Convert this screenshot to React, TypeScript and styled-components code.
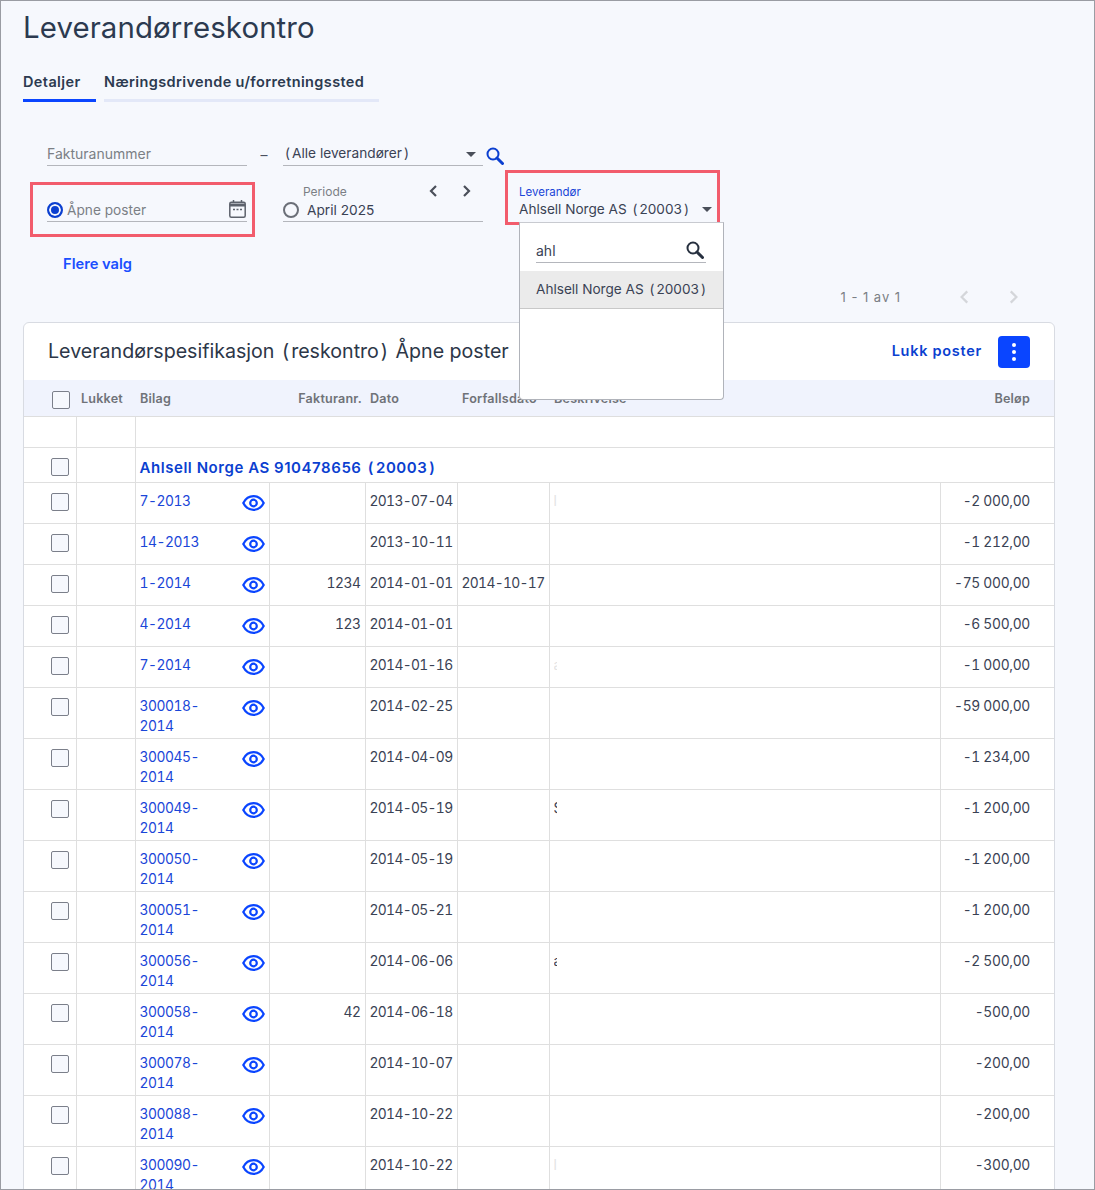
import React from "react";
import styled, { createGlobalStyle } from "styled-components";

const Global = createGlobalStyle`
  html, body { margin: 0; padding: 0; background: #f6f8fd; }
  * { box-sizing: border-box; }
  body { font-family: Inter, "Liberation Sans", sans-serif; color: #3a4254; }
`;

const Frame = styled.div`
  width: 1095px; height: 1190px; overflow: hidden;
  border: 1px solid #9a9ca3; background: #f6f8fd;
  padding: 9px 39px 0 22px;
`;
const Title = styled.h1`
  margin: 0; height: 36px; font-size: 29.4px; line-height: 36px; font-weight: 400; color: #2c3a50; letter-spacing: .1px;
`;
const Tabs = styled.nav`display: flex; gap: 8px; margin-top: 24px;`;
const Tab = styled.div<{ $active?: boolean }>`
  height: 32px; padding: 3px 0 0; font-size: 14.5px; line-height: 18px; font-weight: 600; color: #2c3a50; white-space: nowrap;
  border-bottom: 3px solid ${p => (p.$active ? "#0a45ff" : "#e3e8f8")};
  width: ${p => (p.$active ? "73px" : "275px")};
  letter-spacing: .38px;
`;
const FilterRow = styled.div`display: flex; padding-left: 24px; margin-top: 41px; align-items: flex-end;`;
const FilterRow2 = styled(FilterRow)`margin-top: 16px;`;
const Underlined = styled.div`
  position: relative; width: 200px; height: 23px; border-bottom: 1px solid #b4b6bc;
  font-size: 14px; line-height: 20px; color: #7b7f85; display: flex; align-items: center;
`;
const Tall = styled(Underlined)`height: 40px; align-items: flex-end; padding-bottom: 1px;`;
const Dash = styled.div`width: 36px; padding-right: 2px; text-align: center; font-size: 14px; line-height: 23px; color: #4a5060;`;
const Grow = styled.span`flex: 1;`;
const Caret = styled.span`
  width: 0; height: 0; border-left: 5px solid transparent; border-right: 5px solid transparent;
  border-top: 5px solid #4a4f5a; margin-right: 7px; flex: none;
`;
const SearchBtn = styled.span`display: flex; margin: 0 0 1px 3px;`;
const Radio = styled.span<{ $on?: boolean }>`
  width: 16px; height: 16px; border-radius: 50%; flex: none; margin: 0 ${p => (p.$on ? "4px" : "8px")} 2px 0;
  border: 2px solid ${p => (p.$on ? "#0b3fd0" : "#6b6f78")}; background: ${p => (p.$on ? "#0b3fd0" : "transparent")};
  box-shadow: ${p => (p.$on ? "inset 0 0 0 2px #f6f8fd" : "none")};
`;
const Value = styled.span<{ $dark?: boolean; $up?: boolean }>`
  color: ${p => (p.$dark ? "#3a4254" : "#7b7f85")}; font-size: 13.7px; padding-left: ${p => (p.$up ? "2px" : "0")};
  margin-top: ${p => (p.$up ? "-2px" : "0")};
`;
const FloatLabel = styled.span`
  position: absolute; left: 20px; top: 2px; font-size: 12px; line-height: 16px; color: #7b7f85;
`;
const Arrows = styled.span`
  position: absolute; left: 143px; top: 1px; width: 48px; display: flex; justify-content: space-between; color: #4a4f5a;
`;
const Highlight = styled.div<{ $l: number; $t: number; $w: number; $h: number }>`
  position: absolute; left: ${p => p.$l}px; top: ${p => p.$t}px; width: ${p => p.$w}px; height: ${p => p.$h}px;
  border: 3px solid #f25c6c; pointer-events: none;
`;
const SupplierField = styled.div`
  position: relative; margin-left: 36px; width: 200px; height: 40px; font-size: 13.6px; color: #3a4254;
`;
const SupplierLabel = styled.div`font-size: 11.5px; line-height: 16px; color: #1a46d8; padding-top: 2px;`;
const SupplierValue = styled.div`display: flex; align-items: center; line-height: 18px; white-space: pre;`;
const Paren = styled.span`margin: 0 2px;`;
const Gap = styled.span`margin: 0 1px;`;
const Menu = styled.div`
  position: absolute; left: 0; top: 40px; width: 205px; height: 178px; z-index: 5; background: #fff;
  border: 1px solid #b0b3ba; border-top-color: #c8cad0; border-radius: 0 0 4px 4px; padding-top: 17px;
`;
const MenuSearch = styled.div`
  margin: 0 17px 0 16px; height: 23px; border-bottom: 1px solid #b4b6bc; display: flex; align-items: center;
  justify-content: space-between; font-size: 14px; color: #3a4254; padding: 0 2px 2px 0;
`;
const MenuItem = styled.div`
  margin-top: 8px; height: 38px; background: #ebebeb; border-bottom: 1px solid #c8c8c8; padding-left: 16px;
  font-size: 13.6px; line-height: 36px; color: #3a4254; white-space: pre;
`;
const More = styled.a`
  display: block; margin: 32px 0 0 40px; height: 20px; font-size: 14.7px; line-height: 20px; font-weight: 600; color: #1a4fff;
`;
const Pager = styled.div`
  display: flex; align-items: center; justify-content: flex-end; padding-right: 33px; margin-top: 14px; height: 18px;
  font-size: 13px; color: #7b7f85; letter-spacing: .95px;
`;
const PagerText = styled.span`margin-right: 55px;`;
const PagerArrows = styled.span`display: flex; gap: 30px; color: #d4d6da;`;
const Card = styled.section`
  margin-top: 16px; width: 1032px; border: 1px solid #d8dbe2; border-radius: 6px 6px 0 0; background: #fff;
`;
const CardHead = styled.header`
  display: flex; align-items: center; height: 57px; padding: 0 24px;
`;
const CardTitle = styled.h2`margin: -2px 0 0; flex: 1; font-size: 19.62px; font-weight: 400; color: #2d3748; white-space: pre;`;
const Lukk = styled.a`font-size: 14.5px; font-weight: 600; color: #0b3fd0; letter-spacing: .72px; margin: -2px 16px 0 0;`;
const DotsBtn = styled.button`
  width: 32px; height: 32px; border: 0; border-radius: 4px; background: #0a45ff; display: flex; flex-direction: column;
  align-items: center; justify-content: center; gap: 3px; padding: 0;
`;
const Dot = styled.i`width: 4px; height: 4px; border-radius: 50%; background: #fff;`;
const Table = styled.table`width: 1030px; table-layout: fixed; border-collapse: collapse; font-size: 14px;`;
const Th = styled.th<{ $right?: boolean }>`
  height: 36px; padding: 1px 3px 0 5px; background: #f0f3fd; border-bottom: 1px solid #dedede; font-size: 12.6px; font-weight: 600;
  color: #6f7278; white-space: nowrap; text-align: ${p => (p.$right ? "right" : "left")}; vertical-align: middle; letter-spacing: .2px;
`;
const HeadCheckTh = styled(Th)`padding-left: 27px;`;
const AmountTh = styled(Th)`padding-right: 24px;`;
const Td = styled.td`
  height: 41px; padding: 8px 4px 2px 4px; border: 1px solid #dfdfdf; vertical-align: top; line-height: 20px; color: #3a4254;
  font-size: 13.8px; font-variant-numeric: tabular-nums; letter-spacing: -.45px;
  &:first-child { border-left: 0; }
  &:last-child { border-right: 0; }
`;
const NumTd = styled(Td)`text-align: right; padding-right: 4px;`;
const DateTd = styled(Td)`white-space: nowrap; padding-right: 0; letter-spacing: -.65px;`;
const AmountTd = styled(Td)`text-align: right; padding-right: 24px; letter-spacing: -.3px;`;
const FilterTd = styled(Td)`height: 31px;`;
const GroupTd = styled(Td)`height: 35px; padding: 10px 4px 0; font-size: 15px; font-weight: 600; color: #0b3fd0; letter-spacing: .55px; white-space: pre; font-variant-numeric: normal;`;
const CheckCell = styled(Td)`padding: 10px 0 0 27px;`;
const GroupCheckCell = styled(CheckCell)`height: 35px;`;
const Check = styled.span<{ $head?: boolean }>`
  display: block; width: 18px; height: 18px; border: 1px solid #7b7f8a; border-radius: 2px; background: #f6f8fd;
  margin: ${p => (p.$head ? "4px 0 0 1px" : "0")};
`;
const BilagWrap = styled.div`display: flex; justify-content: space-between; align-items: flex-start;`;
const Link = styled.a`width: 72px; color: #1a46d8;`;
const EyeBox = styled.span`display: flex; margin: 4px 0 0 0;`;
const Clip = styled.span<{ $faint?: boolean }>`
  display: block; width: 3px; overflow: hidden; color: ${p => (p.$faint ? "#e4e4e4" : "#3a4254")}; letter-spacing: 0;
`;

const SearchIcon = ({ color }: { color: string }) => (
  <svg width="18" height="18" viewBox="0 0 18 18" fill="none" aria-hidden>
    <circle cx="7" cy="7" r="5.5" stroke={color} strokeWidth="2" />
    <path d="M11 11 16.500 16.500" stroke={color} strokeWidth="3" strokeLinecap="round" />
  </svg>
);
const Chev = ({ dir, sw = 2.2, size = 16 }: { dir: "l" | "r"; sw?: number; size?: number }) => (
  <svg width={size} height={size} viewBox="0 0 16 16" fill="none" aria-hidden>
    <path d={dir === "l" ? "M10 3 5 8l5 5" : "M6 3l5 5-5 5"} stroke="currentColor" strokeWidth={sw} />
  </svg>
);
const CalendarWrap = styled.span`display: flex; margin: 0 1px 2px 0;`;
const Calendar = () => (
  <CalendarWrap>
    <svg width="17" height="18" viewBox="0 0 17 18" fill="none" aria-hidden>
      <path d="M4.500 0v3M12.500 0v3" stroke="#5d626c" strokeWidth="1.500" />
      <rect x=".8" y="2.200" width="15.400" height="15" rx="1.500" stroke="#5d626c" strokeWidth="1.500" />
      <path d="M1 5h15" stroke="#5d626c" strokeWidth="3" />
      <path d="M4 9.500h2M7.500 9.500h2M11 9.500h2" stroke="#5d626c" strokeWidth="1.600" />
    </svg>
  </CalendarWrap>
);
const Eye = () => (
  <svg width="23" height="16" viewBox="0 0 23 16" fill="none" aria-hidden>
    <path d="M1.300 8C3.600 3.600 7.200 1.200 11.500 1.200S19.400 3.600 21.700 8C19.400 12.400 15.800 14.800 11.500 14.800S3.600 12.400 1.300 8Z" stroke="#0a45ff" strokeWidth="2.200" />
    <circle cx="11.500" cy="8" r="3.300" stroke="#0a45ff" strokeWidth="2.200" />
  </svg>
);

type Row = { b: string; f?: string; d: string; due?: string; clip?: string; faint?: boolean; a: string };
const rows: Row[] = [
  { b: "7-2013", d: "2013-07-04", clip: "l", faint: true, a: "-2 000,00" },
  { b: "14-2013", d: "2013-10-11", a: "-1 212,00" },
  { b: "1-2014", f: "1234", d: "2014-01-01", due: "2014-10-17", a: "-75 000,00" },
  { b: "4-2014", f: "123", d: "2014-01-01", a: "-6 500,00" },
  { b: "7-2014", d: "2014-01-16", clip: "a", faint: true, a: "-1 000,00" },
  { b: "300018-2014", d: "2014-02-25", a: "-59 000,00" },
  { b: "300045-2014", d: "2014-04-09", a: "-1 234,00" },
  { b: "300049-2014", d: "2014-05-19", clip: "S", a: "-1 200,00" },
  { b: "300050-2014", d: "2014-05-19", a: "-1 200,00" },
  { b: "300051-2014", d: "2014-05-21", a: "-1 200,00" },
  { b: "300056-2014", d: "2014-06-06", clip: "a", a: "-2 500,00" },
  { b: "300058-2014", f: "42", d: "2014-06-18", a: "-500,00" },
  { b: "300078-2014", d: "2014-10-07", a: "-200,00" },
  { b: "300088-2014", d: "2014-10-22", a: "-200,00" },
  { b: "300090-2014", d: "2014-10-22", clip: "l", faint: true, a: "-300,00" },
];

const SupplierSpacer = styled.div`width: 36px; flex: none;`;

export default function App() {
  return (
    <Frame>
      <Global />
      <Title>Leverandørreskontro</Title>
      <Tabs>
        <Tab $active>Detaljer</Tab>
        <Tab>Næringsdrivende u/forretningssted</Tab>
      </Tabs>

      <FilterRow>
        <Underlined>Fakturanummer</Underlined>
        <Dash>–</Dash>
        <Underlined>
          <Value $dark $up>(<Gap />Alle leverandører<Gap />)</Value>
          <Grow />
          <Caret />
        </Underlined>
        <SearchBtn><SearchIcon color="#0b3fd0" /></SearchBtn>
      </FilterRow>

      <FilterRow2>
        <Tall>
          <Radio $on />
          <Value>Åpne poster</Value>
          <Grow />
          <Calendar />
          <Highlight $l={-17} $t={0} $w={225} $h={55} />
        </Tall>
        <SupplierSpacer />
        <Tall>
          <FloatLabel>Periode</FloatLabel>
          <Arrows><Chev dir="l" /><Chev dir="r" /></Arrows>
          <Radio />
          <Value $dark>April 2025</Value>
        </Tall>
        <SupplierField>
          <SupplierLabel>Leverandør</SupplierLabel>
          <SupplierValue>
            {"Ahlsell Norge AS "}<Paren>(</Paren>20003<Paren>)</Paren>
            <Grow />
            <Caret />
          </SupplierValue>
          <Highlight $l={-14} $t={-12} $w={215} $h={55} />
          <Menu>
            <MenuSearch>ahl<SearchIcon color="#27303f" /></MenuSearch>
            <MenuItem>{"Ahlsell Norge AS "}<Paren>(</Paren>20003<Paren>)</Paren></MenuItem>
          </Menu>
        </SupplierField>
      </FilterRow2>

      <More>Flere valg</More>
      <Pager>
        <PagerText>1 - 1 av 1</PagerText>
        <PagerArrows><Chev dir="l" sw={2} size={18} /><Chev dir="r" sw={2} size={18} /></PagerArrows>
      </Pager>

      <Card>
        <CardHead>
          <CardTitle>{"Leverandørspesifikasjon "}<Paren>(</Paren>reskontro<Paren>)</Paren>{" Åpne poster"}</CardTitle>
          <Lukk>Lukk poster</Lukk>
          <DotsBtn aria-label="Meny"><Dot /><Dot /><Dot /></DotsBtn>
        </CardHead>
        <Table>
          <colgroup>
            <col width="52" /><col width="59" /><col width="134" /><col width="96" />
            <col width="92" /><col width="92" /><col width="391" /><col width="114" />
          </colgroup>
          <thead>
            <tr>
              <HeadCheckTh><Check $head /></HeadCheckTh>
              <Th>Lukket</Th>
              <Th>Bilag</Th>
              <Th $right>Fakturanr.</Th>
              <Th>Dato</Th>
              <Th>Forfallsdato</Th>
              <Th>Beskrivelse</Th>
              <AmountTh $right>Beløp</AmountTh>
            </tr>
          </thead>
          <tbody>
            <tr>
              <FilterTd /><FilterTd /><FilterTd colSpan={6} />
            </tr>
            <tr>
              <GroupCheckCell><Check /></GroupCheckCell>
              <GroupTd />
              <GroupTd colSpan={6}>{"Ahlsell Norge AS 910478656 "}<Paren>(</Paren>20003<Paren>)</Paren></GroupTd>
            </tr>
            {rows.map(r => (
              <tr key={r.b}>
                <CheckCell><Check /></CheckCell>
                <Td />
                <Td>
                  <BilagWrap>
                    <Link>{r.b}</Link>
                    <EyeBox><Eye /></EyeBox>
                  </BilagWrap>
                </Td>
                <NumTd>{r.f}</NumTd>
                <DateTd>{r.d}</DateTd>
                <DateTd>{r.due}</DateTd>
                <Td>{r.clip && <Clip $faint={r.faint}>{r.clip}</Clip>}</Td>
                <AmountTd>{r.a}</AmountTd>
              </tr>
            ))}
          </tbody>
        </Table>
      </Card>
    </Frame>
  );
}
